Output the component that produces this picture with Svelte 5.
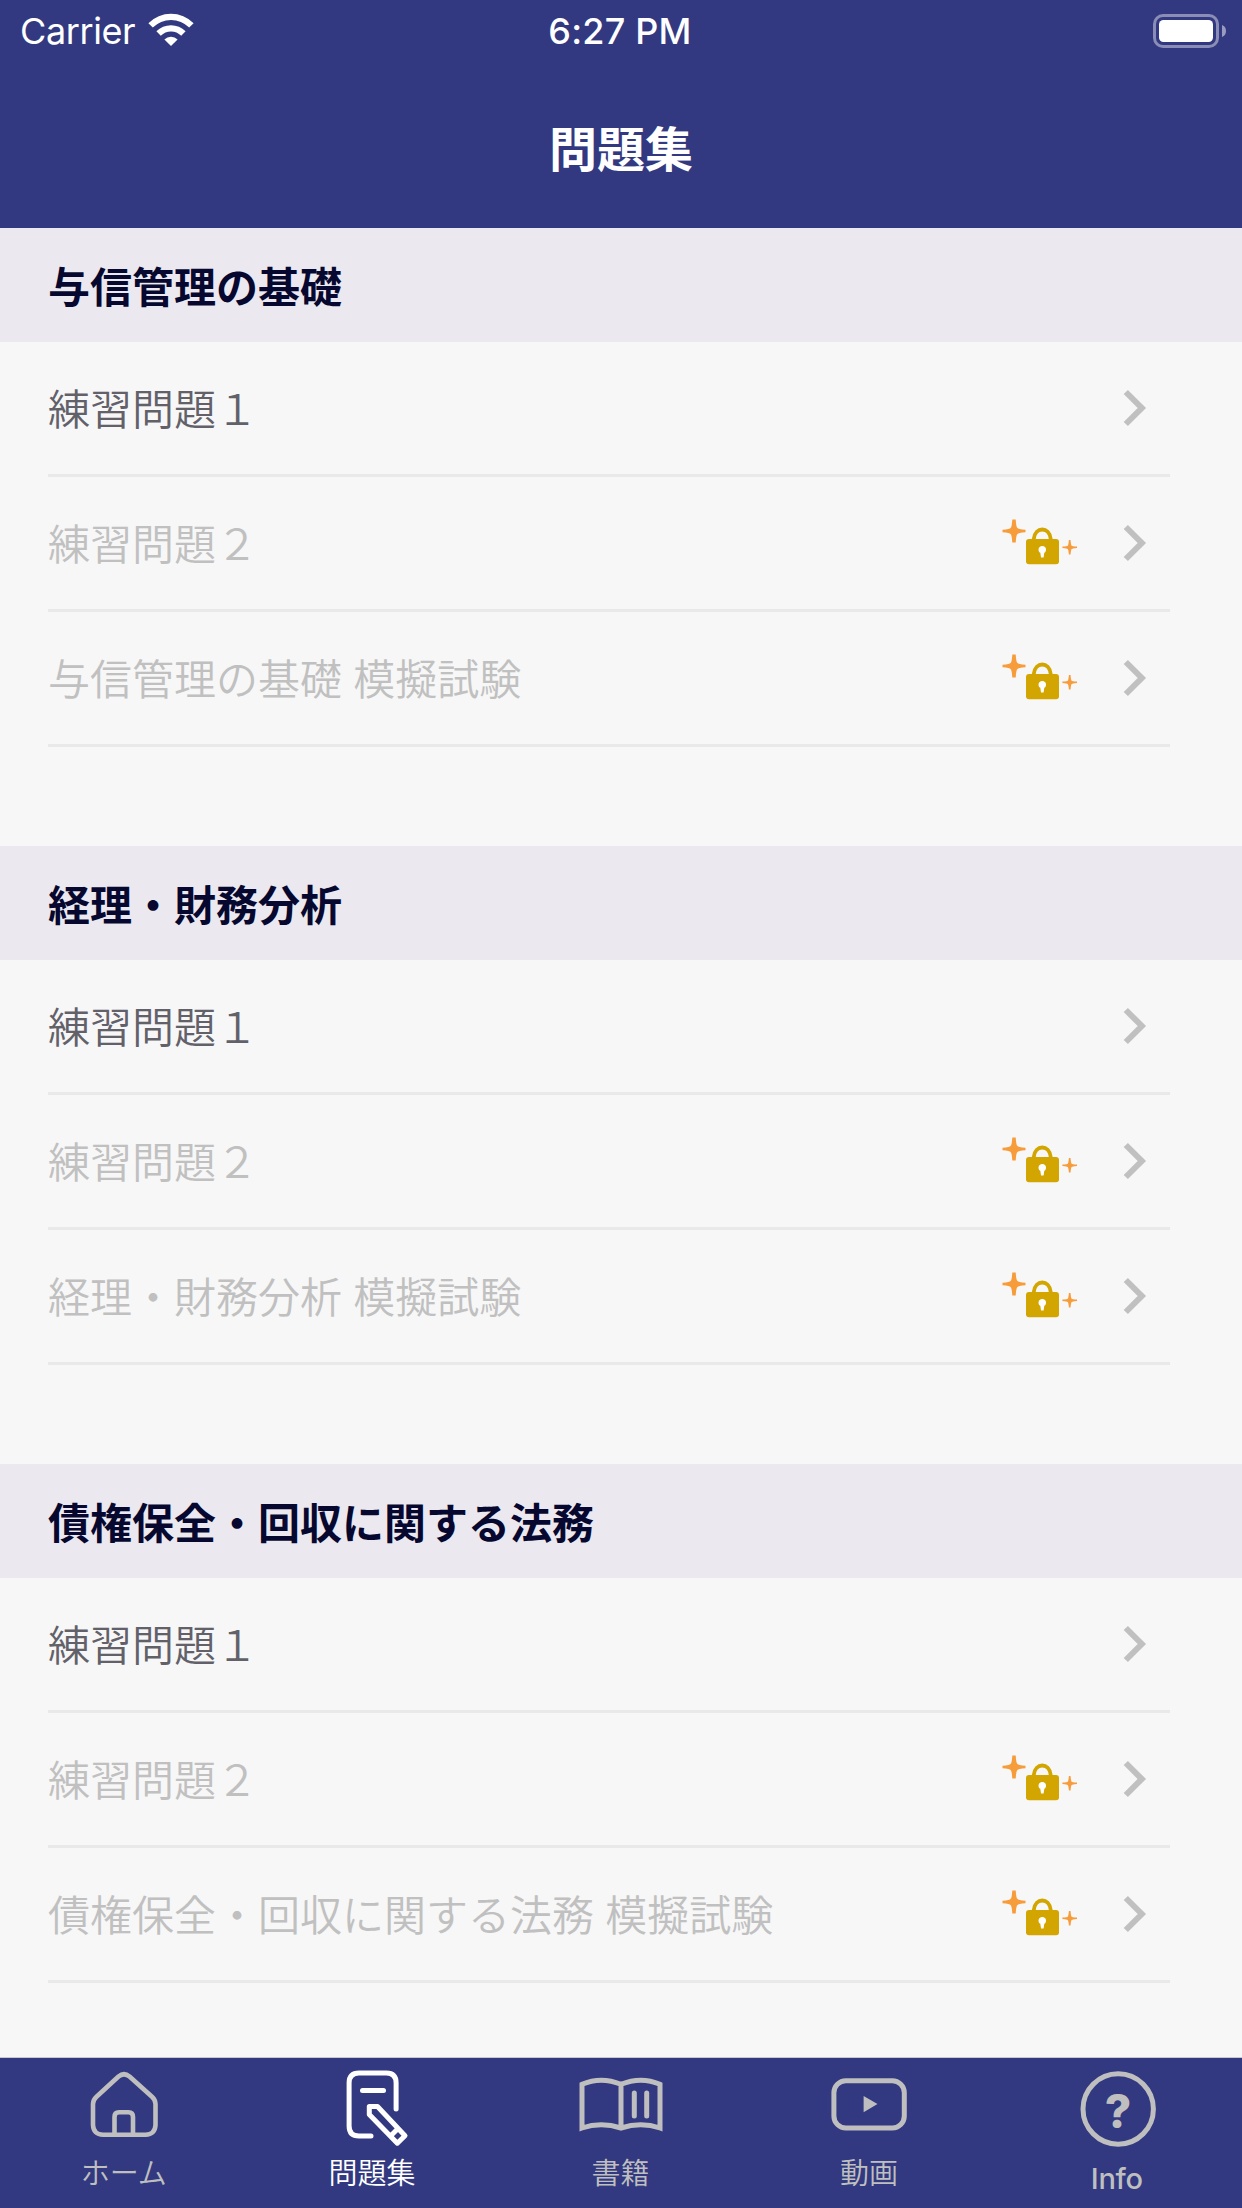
<script>
  const sections = [
    { title: '与信管理の基礎', rows: ['練習問題１', '練習問題２', '与信管理の基礎 模擬試験'] },
    { title: '経理・財務分析', rows: ['練習問題１', '練習問題２', '経理・財務分析 模擬試験'] },
    { title: '債権保全・回収に関する法務', rows: ['練習問題１', '練習問題２', '債権保全・回収に関する法務 模擬試験'] }
  ];
  const tabs = [
    { id: 'home', label: 'ホーム' },
    { id: 'quiz', label: '問題集' },
    { id: 'books', label: '書籍' },
    { id: 'video', label: '動画' },
    { id: 'info', label: 'Info' }
  ];
  const active = 'quiz';
</script>

<div class="screen">
  <header>
    <div class="status">
      <div class="carrier">
        <span class="carrier-name">Carrier</span>
        <svg class="wifi" width="46" height="34" viewBox="0 0 46 34">
          <path d="M0.4 10.2 A32 32 0 0 1 45.6 10.2 L41.2 14.5 A25.8 25.8 0 0 0 4.8 14.5 Z" />
          <path d="M8.4 18.3 A20.6 20.6 0 0 1 37.6 18.3 L33.2 22.7 A14.4 14.4 0 0 0 12.8 22.7 Z" />
          <path d="M16.4 26.4 A9.6 9.6 0 0 1 29.6 26.4 L23 33 Z" />
        </svg>
      </div>
      <span class="time">6:27 PM</span>
      <svg class="battery" width="74" height="34" viewBox="0 0 74 34">
        <rect x="1.5" y="1.5" width="63" height="31" rx="8.5" fill="none" stroke="#8a8db5" stroke-width="3" />
        <rect x="6" y="6" width="54" height="22" rx="4.5" fill="#fff" />
        <path d="M69 11 Q73 12.5 73 17 Q73 21.500 69 23 Z" fill="#9a9cbf" />
      </svg>
    </div>
    <h1>問題集</h1>
  </header>

  <main>
    {#each sections as section}
      <section>
        <h2>{section.title}</h2>
        <ul>
          {#each section.rows as row, i}
            <li class:locked={i > 0}>
              <span class="name">{row}</span>
              {#if i > 0}
                <svg class="lock" width="76" height="48" viewBox="0 0 76 48">
                  <path fill="#f79c3b" d="M10.300 0.500 H13.700 Q14.200 8.500 15.500 9 Q16 10.200 23.500 10.700 V13.300 Q16 13.800 15.500 15 Q14.200 15.500 13.700 23.500 H10.300 Q9.800 15.500 8.500 15 Q8 13.800 0.500 13.300 V10.700 Q8 10.200 8.500 9 Q9.800 8.500 10.300 0.500Z" />
                  <path fill="#f79c3b" d="M66.900 21 H68.500 Q69 26.500 69.700 26.700 Q70 27.200 75 27.500 V29.100 Q70 29.400 69.700 30 Q69 30.200 68.500 35.600 H66.900 Q66.400 30.200 65.700 30 Q65.400 29.400 60.400 29.100 V27.500 Q65.400 27.200 65.700 26.700 Q66.400 26.500 66.900 21Z" />
                  <path fill="none" stroke="#d2a500" stroke-width="3.800" d="M31.800 22 V20 C33 7.300 47.500 7.300 48.700 20 V22" />
                  <rect x="24" y="20" width="33" height="25.300" rx="3" fill="#d2a500" />
                  <path fill="#fff" d="M40.300 27 C44.800 27 45 32.500 42.300 33.800 L41.600 38.500 H39 L38.300 33.800 C35.600 32.500 35.800 27 40.300 27Z" />
                </svg>
              {/if}
              <svg class="chevron" width="24" height="38" viewBox="0 0 24 38">
                <path d="M2.800 3 L18.800 19 L2.800 35" fill="none" stroke="#c0c0c0" stroke-width="6" />
              </svg>
            </li>
          {/each}
        </ul>
      </section>
    {/each}
  </main>

  <nav>
    {#each tabs as tab}
      <div class="tab" class:active={tab.id === active} class:latin={tab.id === 'info'}>
        <svg width="120" height="84" viewBox="0 0 120 84">
          {#if tab.id === 'home'}
            <g class="line thin">
              <path d="M29 40 Q29 36 32.500 32.800 L54.500 12.500 Q60 8 65.500 12.500 L88 32.800 Q91.500 36 91.500 40 V61 Q91 70.500 81.500 70.700 H39 Q29.500 70.500 29 61Z" />
              <path d="M50.500 70 V53 Q50.500 48.300 55 48.300 H64.500 Q69 48.300 69 53 V70" />
            </g>
          {:else if tab.id === 'quiz'}
            <g class="line">
              <path d="M83.100 45 V19 Q83.100 9 73.500 9 H46 Q36.100 9 36.100 19 V62 Q36.100 72 46 72 H58" />
              <path d="M49.500 26.400 H70.500" />
              <path d="M56.300 42.500 H64.500 L92 71.700 L84.300 79.200 L56.300 50.500Z M77.500 72 L84.300 65.300" />
            </g>
          {:else if tab.id === 'books'}
            <g class="line sharp">
              <path d="M21 20.300 Q40 12 60 20.300 Q80 12 99 20.300 V64 Q80 57.500 60 64 Q40 57.500 21 64Z M60 20 V64" />
            </g>
            <g class="line"><path d="M73.300 29 V52 M85.700 29 V52" /></g>
          {:else if tab.id === 'video'}
            <g class="line">
              <rect x="24.900" y="16.700" width="70.400" height="47.300" rx="12" />
            </g>
            <path fill="currentColor" d="M54.600 32 L68.500 40 L54.600 48.300Z" />
          {:else}
            <g class="line"><circle cx="60.200" cy="45" r="35.200" /></g>
            <text x="60" y="63.500" text-anchor="middle">?</text>
          {/if}
        </svg>
        <span class="label">{tab.label}</span>
      </div>
    {/each}
  </nav>
</div>

<style>
  :global(body) {
    margin: 0;
  }
  .screen {
    width: 1242px;
    height: 2208px;
    display: flex;
    flex-direction: column;
    overflow: hidden;
    background: #f7f7f7;
    font-family: 'Noto Sans CJK JP', sans-serif;
  }
  header {
    height: 228px;
    flex: none;
    background: #323980;
    color: #fff;
  }
  .status {
    height: 60px;
    display: grid;
    grid-template-columns: 1fr auto 1fr;
    align-items: center;
    padding: 0 15px 0 20px;
    box-sizing: border-box;
    font-family: Inter, sans-serif;
    font-size: 36px;
    line-height: 60px;
  }
  .carrier {
    display: flex;
    align-items: center;
    gap: 13px;
    padding-top: 1px;
  }
  .carrier-name {
    letter-spacing: -0.4px;
  }
  .wifi {
    fill: #fff;
    margin-top: -3px;
  }
  .time {
    font-weight: 500;
    letter-spacing: 0.2px;
    padding-top: 1px;
    margin: 0 5px 0 -2px;
  }
  .battery {
    justify-self: end;
  }
  h1 {
    margin: 0;
    padding-top: 51px;
    font-size: 48px;
    line-height: 70px;
    font-weight: 700;
    text-align: center;
  }
  main {
    flex: none;
    height: 1829px;
    overflow: hidden;
  }
  section {
    padding-bottom: 99px;
  }
  h2 {
    margin: 0;
    height: 114px;
    padding-left: 48px;
    background: #ebe8ef;
    color: #07082f;
    font-size: 42px;
    line-height: 113px;
    font-weight: 700;
  }
  ul {
    margin: 0;
    padding: 0 72px 0 48px;
    list-style: none;
  }
  li {
    height: 132px;
    display: flex;
    align-items: center;
    padding-right: 23px;
    border-bottom: 3px solid #e9e9e9;
    color: #62616a;
    font-size: 42px;
    font-weight: 350;
    word-spacing: 2px;
  }
  li.locked {
    color: #c0c0c0;
  }
  .name {
    flex: 1;
    padding-bottom: 4px;
  }
  .lock {
    margin-right: 45px;
  }
  nav {
    flex: none;
    height: 151px;
    box-sizing: border-box;
    border-top: 1px solid #c9c9cf;
    background: #323980;
    display: grid;
    grid-template-columns: repeat(5, 1fr);
  }
  .tab {
    display: flex;
    flex-direction: column;
    align-items: center;
    padding-top: 6px;
    color: #bfbfbf;
  }
  .tab.active {
    color: #fff;
  }
  .tab svg {
    flex: none;
  }
  .line {
    fill: none;
    stroke: currentColor;
    stroke-width: 5;
    stroke-linecap: round;
    stroke-linejoin: round;
  }
  .thin {
    stroke-width: 4.6;
  }
  .sharp {
    stroke-linejoin: miter;
  }
  text {
    fill: currentColor;
    font: 800 46px Inter, sans-serif;
  }
  .label {
    font-size: 29px;
    line-height: 44px;
    font-weight: 350;
    margin-top: 1px;
    padding-right: 1px;
  }
  .latin .label {
    font-family: Inter, sans-serif;
    font-weight: 500;
    font-size: 29px;
    letter-spacing: -0.3px;
    margin-top: 9px;
    padding-right: 2px;
  }
</style>
